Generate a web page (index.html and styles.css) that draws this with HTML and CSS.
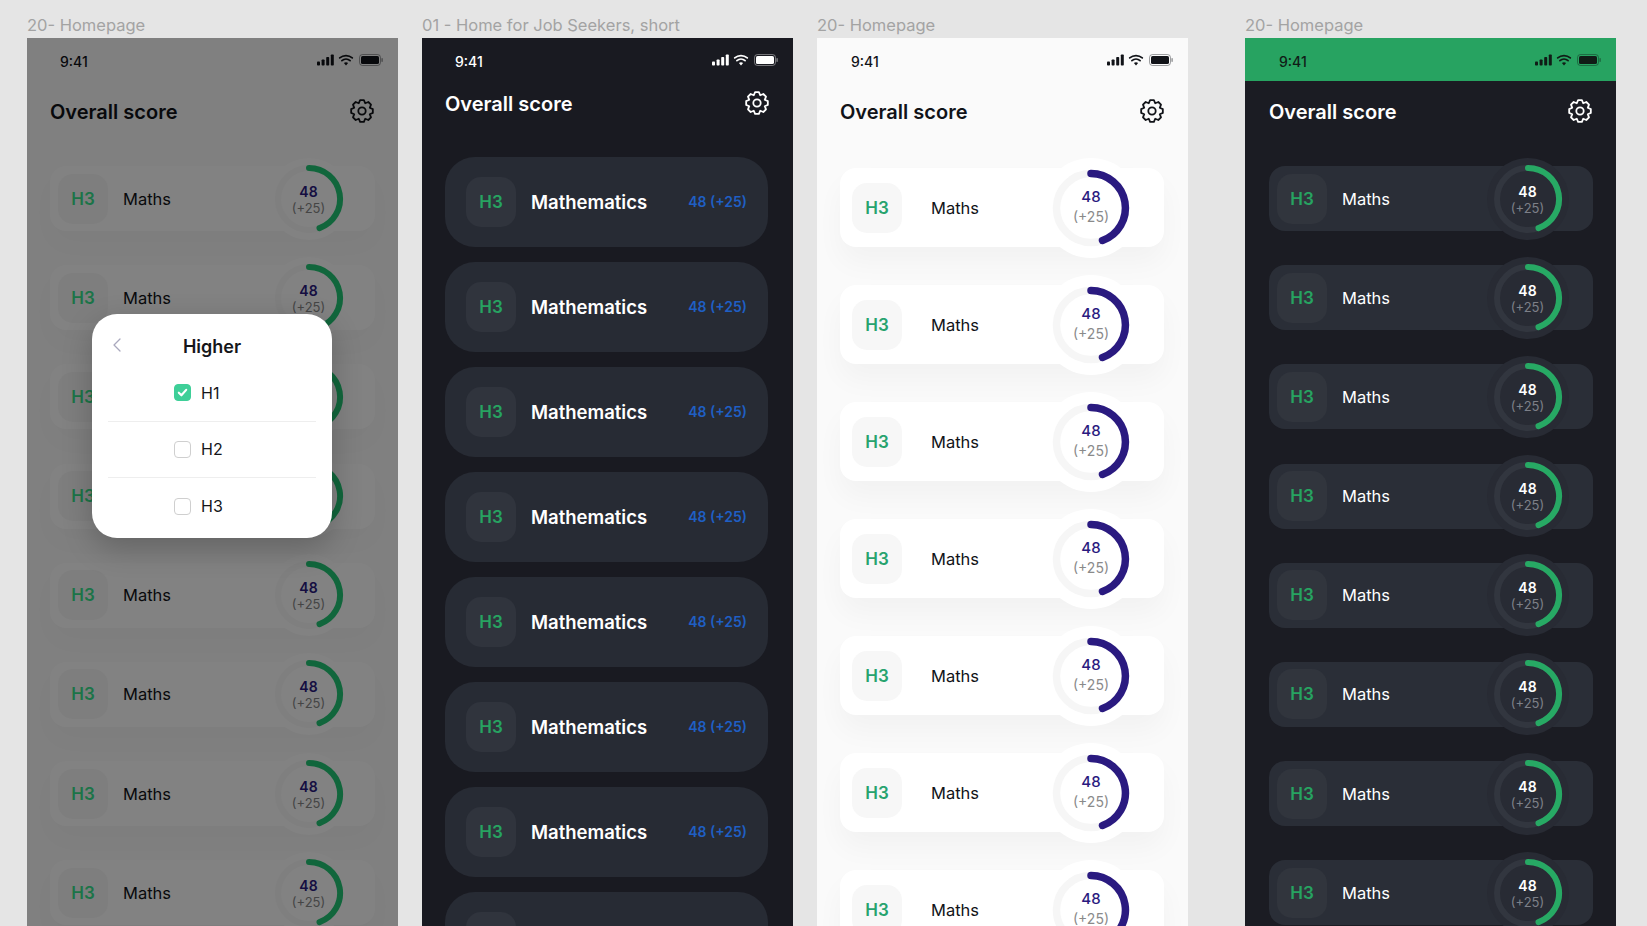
FILE: index.html
```html
<!DOCTYPE html>
<html lang="en">
<head>
<meta charset="utf-8">
<title>Overall score</title>
<link rel="stylesheet" href="styles.css">
</head>
<body>
<svg class="defs" width="0" height="0" aria-hidden="true">
  <symbol id="status" viewBox="0 0 66 12">
    <rect x="0" y="7.5" width="3" height="4" rx=".8" fill="currentColor"/>
    <rect x="4.6" y="5.5" width="3" height="6" rx=".8" fill="currentColor"/>
    <rect x="9.2" y="3" width="3" height="8.5" rx=".8" fill="currentColor"/>
    <rect x="13.8" y=".5" width="3" height="11" rx=".8" fill="currentColor"/>
    <path d="M29 11.5l-2.1-2.4a3.1 3.1 0 0 1 4.2 0z" fill="currentColor"/>
    <path d="M24.9 6.6a6.2 6.2 0 0 1 8.2 0M22.7 3.9a9.6 9.6 0 0 1 12.6 0" fill="none" stroke="currentColor" stroke-width="1.7" stroke-linecap="round"/>
    <rect x="42.5" y=".5" width="21" height="11" rx="3" fill="none" stroke="currentColor" stroke-opacity=".4"/>
    <rect x="44" y="2" width="18" height="8" rx="1.6" fill="currentColor"/>
    <rect x="64.4" y="4" width="1.4" height="4" rx=".7" fill="currentColor" fill-opacity=".45"/>
  </symbol>
  <symbol id="gear" viewBox="0 0 24 24">
    <path d="M10.09 1.17H13.91L15.21 4.24L18.31 2.99L21.01 5.69L19.76 8.79L22.83 10.09V13.91L19.76 15.21L21.01 18.31L18.31 21.01L15.21 19.76L13.91 22.83H10.09L8.79 19.76L5.69 21.01L2.99 18.31L4.24 15.21L1.17 13.91V10.09L4.24 8.79L2.99 5.69L5.69 2.99L8.79 4.24Z" fill="none" stroke="currentColor" stroke-width="1.8" stroke-linejoin="round"/>
    <circle cx="12" cy="12" r="3.7" fill="none" stroke="currentColor" stroke-width="1.8"/>
  </symbol>
  <symbol id="ring-s" viewBox="-41 -41 82 82">
    <circle class="track" r="31"/>
    <path class="arc" d="M0 -31A31 31 0 0 1 10.5 29.2"/>
  </symbol>
  <symbol id="ring-l" viewBox="-50 -50 100 100">
    <circle class="track" r="34.5"/>
    <path class="arc" d="M0 -34.5A34.5 34.5 0 0 1 11.5 32.5"/>
  </symbol>
</svg>

<main class="board">

  <section class="artboard">
    <h2 class="label">20- Homepage</h2>
    <div class="phone phone-light phone-compact">
      <div class="status"><span class="time">9:41</span><svg class="status-icons"><use href="#status"/></svg></div>
      <header class="head"><h1 class="title">Overall score</h1><svg class="gear"><use href="#gear"/></svg></header>
      <ul class="list">
        <li class="card"><span class="badge">H3</span><span class="subject">Maths</span><div class="ring"><svg class="ring-svg"><use href="#ring-s"/></svg><p class="score"><b>48</b><span>(+25)</span></p></div></li>
        <li class="card"><span class="badge">H3</span><span class="subject">Maths</span><div class="ring"><svg class="ring-svg"><use href="#ring-s"/></svg><p class="score"><b>48</b><span>(+25)</span></p></div></li>
        <li class="card"><span class="badge">H3</span><span class="subject">Maths</span><div class="ring"><svg class="ring-svg"><use href="#ring-s"/></svg><p class="score"><b>48</b><span>(+25)</span></p></div></li>
        <li class="card"><span class="badge">H3</span><span class="subject">Maths</span><div class="ring"><svg class="ring-svg"><use href="#ring-s"/></svg><p class="score"><b>48</b><span>(+25)</span></p></div></li>
        <li class="card"><span class="badge">H3</span><span class="subject">Maths</span><div class="ring"><svg class="ring-svg"><use href="#ring-s"/></svg><p class="score"><b>48</b><span>(+25)</span></p></div></li>
        <li class="card"><span class="badge">H3</span><span class="subject">Maths</span><div class="ring"><svg class="ring-svg"><use href="#ring-s"/></svg><p class="score"><b>48</b><span>(+25)</span></p></div></li>
        <li class="card"><span class="badge">H3</span><span class="subject">Maths</span><div class="ring"><svg class="ring-svg"><use href="#ring-s"/></svg><p class="score"><b>48</b><span>(+25)</span></p></div></li>
        <li class="card"><span class="badge">H3</span><span class="subject">Maths</span><div class="ring"><svg class="ring-svg"><use href="#ring-s"/></svg><p class="score"><b>48</b><span>(+25)</span></p></div></li>
      </ul>
      <div class="scrim"></div>
      <div class="modal">
        <div class="modal-head">
          <svg class="chevron" viewBox="0 0 10 16"><path d="M8 2L2 8l6 6"/></svg>
          <h3 class="modal-title">Higher</h3>
        </div>
        <label class="option"><span class="check check-on"><svg viewBox="0 0 12 12"><path d="M2.6 6.2l2.4 2.4 4.4-5"/></svg></span>H1</label>
        <label class="option"><span class="check"></span>H2</label>
        <label class="option"><span class="check"></span>H3</label>
      </div>
    </div>
  </section>

  <section class="artboard">
    <h2 class="label">01 - Home for Job Seekers, short</h2>
    <div class="phone phone-jobs">
      <div class="status"><span class="time">9:41</span><svg class="status-icons"><use href="#status"/></svg></div>
      <header class="head"><h1 class="title">Overall score</h1><svg class="gear"><use href="#gear"/></svg></header>
      <ul class="list">
        <li class="card"><span class="badge">H3</span><span class="subject">Mathematics</span><span class="inline-score">48 (+25)</span></li>
        <li class="card"><span class="badge">H3</span><span class="subject">Mathematics</span><span class="inline-score">48 (+25)</span></li>
        <li class="card"><span class="badge">H3</span><span class="subject">Mathematics</span><span class="inline-score">48 (+25)</span></li>
        <li class="card"><span class="badge">H3</span><span class="subject">Mathematics</span><span class="inline-score">48 (+25)</span></li>
        <li class="card"><span class="badge">H3</span><span class="subject">Mathematics</span><span class="inline-score">48 (+25)</span></li>
        <li class="card"><span class="badge">H3</span><span class="subject">Mathematics</span><span class="inline-score">48 (+25)</span></li>
        <li class="card"><span class="badge">H3</span><span class="subject">Mathematics</span><span class="inline-score">48 (+25)</span></li>
        <li class="card"><span class="badge"></span></li>
      </ul>
    </div>
  </section>

  <section class="artboard artboard-wide-gap">
    <h2 class="label">20- Homepage</h2>
    <div class="phone phone-airy">
      <div class="status"><span class="time">9:41</span><svg class="status-icons"><use href="#status"/></svg></div>
      <header class="head"><h1 class="title">Overall score</h1><svg class="gear"><use href="#gear"/></svg></header>
      <ul class="list">
        <li class="card"><span class="badge">H3</span><span class="subject">Maths</span><div class="ring"><svg class="ring-svg"><use href="#ring-l"/></svg><p class="score"><b>48</b><span>(+25)</span></p></div></li>
        <li class="card"><span class="badge">H3</span><span class="subject">Maths</span><div class="ring"><svg class="ring-svg"><use href="#ring-l"/></svg><p class="score"><b>48</b><span>(+25)</span></p></div></li>
        <li class="card"><span class="badge">H3</span><span class="subject">Maths</span><div class="ring"><svg class="ring-svg"><use href="#ring-l"/></svg><p class="score"><b>48</b><span>(+25)</span></p></div></li>
        <li class="card"><span class="badge">H3</span><span class="subject">Maths</span><div class="ring"><svg class="ring-svg"><use href="#ring-l"/></svg><p class="score"><b>48</b><span>(+25)</span></p></div></li>
        <li class="card"><span class="badge">H3</span><span class="subject">Maths</span><div class="ring"><svg class="ring-svg"><use href="#ring-l"/></svg><p class="score"><b>48</b><span>(+25)</span></p></div></li>
        <li class="card"><span class="badge">H3</span><span class="subject">Maths</span><div class="ring"><svg class="ring-svg"><use href="#ring-l"/></svg><p class="score"><b>48</b><span>(+25)</span></p></div></li>
        <li class="card"><span class="badge">H3</span><span class="subject">Maths</span><div class="ring"><svg class="ring-svg"><use href="#ring-l"/></svg><p class="score"><b>48</b><span>(+25)</span></p></div></li>
      </ul>
    </div>
  </section>

  <section class="artboard">
    <h2 class="label">20- Homepage</h2>
    <div class="phone phone-dark phone-compact">
      <div class="status status-green"><span class="time">9:41</span><svg class="status-icons"><use href="#status"/></svg></div>
      <header class="head"><h1 class="title">Overall score</h1><svg class="gear"><use href="#gear"/></svg></header>
      <ul class="list">
        <li class="card"><span class="badge">H3</span><span class="subject">Maths</span><div class="ring"><svg class="ring-svg"><use href="#ring-s"/></svg><p class="score"><b>48</b><span>(+25)</span></p></div></li>
        <li class="card"><span class="badge">H3</span><span class="subject">Maths</span><div class="ring"><svg class="ring-svg"><use href="#ring-s"/></svg><p class="score"><b>48</b><span>(+25)</span></p></div></li>
        <li class="card"><span class="badge">H3</span><span class="subject">Maths</span><div class="ring"><svg class="ring-svg"><use href="#ring-s"/></svg><p class="score"><b>48</b><span>(+25)</span></p></div></li>
        <li class="card"><span class="badge">H3</span><span class="subject">Maths</span><div class="ring"><svg class="ring-svg"><use href="#ring-s"/></svg><p class="score"><b>48</b><span>(+25)</span></p></div></li>
        <li class="card"><span class="badge">H3</span><span class="subject">Maths</span><div class="ring"><svg class="ring-svg"><use href="#ring-s"/></svg><p class="score"><b>48</b><span>(+25)</span></p></div></li>
        <li class="card"><span class="badge">H3</span><span class="subject">Maths</span><div class="ring"><svg class="ring-svg"><use href="#ring-s"/></svg><p class="score"><b>48</b><span>(+25)</span></p></div></li>
        <li class="card"><span class="badge">H3</span><span class="subject">Maths</span><div class="ring"><svg class="ring-svg"><use href="#ring-s"/></svg><p class="score"><b>48</b><span>(+25)</span></p></div></li>
        <li class="card"><span class="badge">H3</span><span class="subject">Maths</span><div class="ring"><svg class="ring-svg"><use href="#ring-s"/></svg><p class="score"><b>48</b><span>(+25)</span></p></div></li>
      </ul>
    </div>
  </section>

</main>
</body>
</html>
```
FILE: styles.css
```css
* { box-sizing: border-box; }

html, body {
  margin: 0;
  height: 926px;
  overflow: hidden;
  background: #e5e5e5;
  font-family: Inter, "Liberation Sans", sans-serif;
}

.defs { display: block; height: 0; }

.board {
  display: flex;
  gap: 24px;
  padding: 15px 0 0 27px;
}

.artboard { width: 371px; flex: none; }
.artboard-wide-gap { margin-right: 33px; }

.label {
  margin: 0;
  height: 23px;
  font-size: 16.5px;
  line-height: 20px;
  font-weight: 400;
  color: #a3a3a3;
  white-space: nowrap;
}

.phone {
  position: relative;
  height: 888px;
  overflow: hidden;
}

.status {
  display: flex;
  align-items: center;
  justify-content: space-between;
  height: 43px;
  padding: 4px 15px 0 33px;
}
.status-icons { width: 66px; height: 12px; margin-top: -3px; }
.time { font-size: 14px; font-weight: 500; }

.head {
  display: flex;
  align-items: center;
  justify-content: space-between;
  padding: 0 24px 0 23px;
}
.title { margin: 0; font-size: 20px; font-weight: 600; }
.gear { width: 24px; height: 24px; margin-top: -3px; }

.list {
  list-style: none;
  margin: 0;
  display: flex;
  flex-direction: column;
  padding-left: 23px;
  padding-right: 24px;
}

.card { display: flex; align-items: center; flex: none; }
.badge {
  flex: none;
  display: flex;
  align-items: center;
  justify-content: center;
  width: 50px;
  height: 50px;
  font-size: 17px;
  font-weight: 600;
  border-radius: 15px;
}
.subject { font-size: 16.5px; }

.ring {
  flex: none;
  display: grid;
  place-items: center;
  margin-left: auto;
  border-radius: 50%;
}
.ring > * { grid-area: 1 / 1; }
.ring-svg { width: 100%; height: 100%; }
.track { fill: none; stroke: var(--track); stroke-width: var(--sw); }
.arc { fill: none; stroke: var(--arc); stroke-width: var(--sw); stroke-linecap: round; }
.score { margin: 0; display: flex; flex-direction: column; align-items: center; }
.score b { font-weight: 600; color: var(--num); }
.score span { color: var(--delta); }

/* compact rows: first and fourth artboards */
.phone-compact { --sw: 6; }
.phone-compact .head { height: 62px; }
.phone-compact .list { padding-top: 23px; gap: 34.2px; padding-right: 23px; }
.phone-compact .card {
  height: 65px;
  padding: 0 25px 0 8px;
  gap: 15px;
  border-radius: 16px;
}
.phone-compact .ring { width: 82px; height: 82px; margin-top: -8px; margin-bottom: -8px; }
.phone-compact .score { padding-top: 3px; padding-right: 1px; }
.phone-compact .score b { font-size: 14px; line-height: 16px; }
.phone-compact .score span { font-size: 13px; line-height: 17px; }

/* dimmed light artboard */
.phone-light {
  --track: #f9f9f9; --arc: #23c976; --num: #2a1a80; --delta: #888;
  background: #fbfbfb;
  color: #111318;
}
.phone-light .card { background: #fff; box-shadow: 0 14px 26px rgba(0, 0, 0, .02); }
.phone-light .ring { background: #fff; }
.phone-light .badge { background: #f8f8f8; color: #38e48e; }

.scrim { position: absolute; inset: 0; background: rgba(0, 0, 0, .49); }

.modal {
  position: absolute;
  left: 65px;
  top: 276px;
  width: 240px;
  height: 224px;
  background: #fff;
  border-radius: 25px;
  box-shadow: 0 10px 30px rgba(0, 0, 0, .22);
  padding: 0 16px;
  color: #15161a;
}
.modal-head {
  position: relative;
  display: flex;
  align-items: center;
  justify-content: center;
  height: 51px;
  padding-top: 13px;
}
.modal-title { margin: 0; font-size: 18px; font-weight: 600; }
.chevron {
  position: absolute;
  left: 4px;
  top: 23px;
  width: 10px;
  height: 16px;
  fill: none;
  stroke: #a9a8bd;
  stroke-width: 1.3;
  stroke-linecap: round;
  stroke-linejoin: round;
}
.option {
  display: flex;
  align-items: center;
  gap: 10px;
  height: 56.5px;
  padding-left: 66px;
  font-size: 16px;
  border-bottom: 1px solid #eee;
}
.option:last-child { border-bottom: 0; }
.check {
  width: 17px;
  height: 17px;
  border: 1.5px solid #cfcfcf;
  border-radius: 4px;
}
.check-on { background: #3ecf98; border-color: #3ecf98; display: flex; align-items: center; justify-content: center; }
.check-on svg { width: 13px; height: 13px; fill: none; stroke: #fff; stroke-width: 2; stroke-linecap: round; stroke-linejoin: round; }

/* job seekers artboard */
.phone-jobs { background: #191a21; color: #fff; }
.phone-jobs .head { height: 46px; }
.phone-jobs .list { padding-top: 30px; gap: 15px; padding-right: 25px; }
.phone-jobs .card {
  height: 90px;
  padding: 0 21px 0 21px;
  gap: 15px;
  background: #272b34;
  border-radius: 30px;
}
.phone-jobs .badge { background: #30343d; color: #27a361; }
.phone-jobs .subject { font-size: 18.5px; font-weight: 600; }
.inline-score { margin-left: auto; font-size: 14px; font-weight: 600; color: #1f5fc4; margin-top: -2px; }

/* airy light artboard */
.phone-airy {
  --sw: 7.5;
  --track: #f6f6f6; --arc: #2a1a80; --num: #2a1a80; --delta: #8a8a8a;
  background: #fafafa;
  color: #111318;
}
.phone-airy .status { padding-left: 34px; }
.phone-airy .head { height: 62px; }
.phone-airy .list { padding-top: 25px; gap: 38px; }
.phone-airy .card {
  height: 79px;
  padding: 0 23px 0 12px;
  gap: 29px;
  background: #fff;
  border-radius: 16px;
  box-shadow: 0 16px 28px rgba(0, 0, 0, .035);
}
.phone-airy .badge { background: #f7f7f7; color: #27a36e; }
.phone-airy .ring { width: 100px; height: 100px; margin-top: -11px; margin-bottom: -11px; background: #fff; }
.phone-airy .score { padding-bottom: 1px; }
.phone-airy .score b { font-size: 15px; line-height: 20px; font-weight: 500; }
.phone-airy .score span { font-size: 14px; line-height: 20px; }

/* dark artboard */
.phone-dark {
  --track: #32363f; --arc: #27a964; --num: #fff; --delta: #7d8088;
  background: #1b1c23;
  color: #fff;
}
.phone-dark .status { padding-left: 34px; }
.phone-dark .head { padding-left: 24px; }
.phone-dark .list { padding-left: 24px; }
.phone-dark .card { background: #2a2e37; padding-right: 24px; }
.phone-dark .ring { background: #282b34; }
.phone-dark .badge { background: #31353d; color: #27a361; }
.status-green { background: #27a361; color: #101c16; }
```
